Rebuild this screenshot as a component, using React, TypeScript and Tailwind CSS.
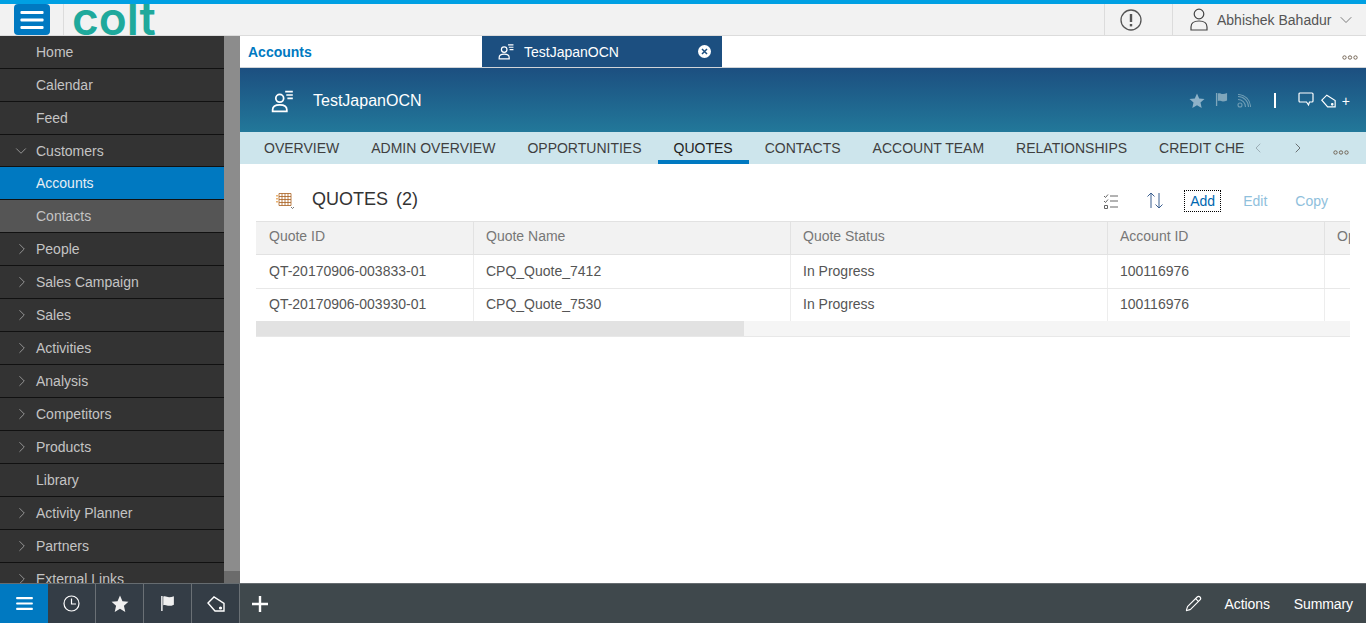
import React from 'react';
import { ChevronDown, ChevronLeft, ChevronRight, Pencil } from 'lucide-react';

const NAV_ITEMS = [
    { label: 'Home' },
    { label: 'Calendar' },
    { label: 'Feed' },
    { label: 'Customers', open: true },
    { label: 'Accounts', active: true },
    { label: 'Contacts', sub: true },
    { label: 'People', arrow: true },
    { label: 'Sales Campaign', arrow: true },
    { label: 'Sales', arrow: true },
    { label: 'Activities', arrow: true },
    { label: 'Analysis', arrow: true },
    { label: 'Competitors', arrow: true },
    { label: 'Products', arrow: true },
    { label: 'Library' },
    { label: 'Activity Planner', arrow: true },
    { label: 'Partners', arrow: true },
    { label: 'External Links', arrow: true },
];

const TABS = ['OVERVIEW', 'ADMIN OVERVIEW', 'OPPORTUNITIES', 'QUOTES', 'CONTACTS', 'ACCOUNT TEAM', 'RELATIONSHIPS', 'CREDIT CHECK'];

const COLUMNS = [
    { label: 'Quote ID', width: 'w-[218px]', pad: 'pl-[13px]' },
    { label: 'Quote Name', width: 'w-[317px]', pad: 'pl-3' },
    { label: 'Quote Status', width: 'w-[317px]', pad: 'pl-3' },
    { label: 'Account ID', width: 'w-[217px]', pad: 'pl-3' },
    { label: 'Opportunity', width: 'w-[60px]', pad: 'pl-3' },
];

const ROWS = [
    ['QT-20170906-003833-01', 'CPQ_Quote_7412', 'In Progress', '100116976', ''],
    ['QT-20170906-003930-01', 'CPQ_Quote_7530', 'In Progress', '100116976', ''],
];

const AccountIcon = ({ className }: { className?: string }) => (
    <svg className={className} viewBox="0 0 22 22" fill="none" stroke="currentColor" strokeWidth="1.6">
        <circle cx="8" cy="8.5" r="3.6" />
        <path d="M1.5 20.5 v-1.5 c0-3 2.5-4.5 6.5-4.5 s6.5 1.500 6.500 4.500 v1.500 z" />
        <path d="M13 2.500 h7 M14 5.500 h6 M15 8.500 h5" />
    </svg>
);

const StarIcon = ({ className }: { className?: string }) => (
    <svg className={className} viewBox="0 0 16 16" fill="currentColor">
        <path d="M8 .5 l2.200 5 5.300.5 -4 3.600 1.200 5.400 L8 12.200 3.300 15 l1.200-5.400 -4-3.600 5.300-.5 z" />
    </svg>
);

const FlagIcon = ({ className }: { className?: string }) => (
    <svg className={className} viewBox="0 0 14 16" fill="currentColor">
        <path d="M1 1 h1.400 v14 H1 z" />
        <path d="M3 1.500 c2.500-.8 3.500.6 5.500.6 c1.500 0 3-.4 4.500-1 v8 c-1.500.8-3 1.100-4.500 1.100 c-2 0-3-1.300-5.500-.5 z" />
    </svg>
);

const TagIcon = ({ className }: { className?: string }) => (
    <svg className={className} viewBox="0 0 18 16" fill="none" stroke="currentColor" strokeWidth="1.400">
        <path d="M1 7 L7 1 l10 6.500 v7.500 H8 z" />
        <circle cx="13.500" cy="12" r="0.900" fill="currentColor" />
    </svg>
);

const HamburgerIcon = ({ className }: { className?: string }) => (
    <svg className={className} viewBox="0 0 18 14" fill="currentColor">
        <rect x="0" y="0" width="18" height="2.400" rx="0.800" />
        <rect x="0" y="5.800" width="18" height="2.400" rx="0.800" />
        <rect x="0" y="11.600" width="18" height="2.400" rx="0.800" />
    </svg>
);

const Dots = () => (
    <svg width="16" height="5" viewBox="0 0 16 5" fill="none" stroke="#6b5b4b" strokeWidth="0.900">
        <circle cx="2.500" cy="2.500" r="1.700" />
        <circle cx="8" cy="2.500" r="1.700" />
        <circle cx="13.500" cy="2.500" r="1.700" />
    </svg>
);

const TopBar = () => (
    <div className="h-9 shrink-0 bg-[#f2f2f2] border-t-4 border-[#00a0e3] border-b border-b-[#dcdcdc] flex items-stretch">
        <div className="w-9 h-[31px] ml-[14px] mr-[13px] bg-[#0079c1] rounded-sm flex items-center justify-center">
            <HamburgerIcon className="w-[24px] h-[18px] text-white" />
        </div>
        <div className="border-l border-[#dcdcdc] pl-2 h-[31px] overflow-hidden">
            <span className="block text-[#1fa99c] text-[46px] leading-[29px] font-semibold [font-family:'Inter',sans-serif]">colt</span>
        </div>
        <div className="ml-auto flex items-stretch">
            <div className="w-[68px] border-l border-[#dcdcdc] flex items-center pl-[15px]">
                <svg width="22" height="22" viewBox="0 0 22 22" fill="none" stroke="#555" strokeWidth="1.300">
                    <circle cx="11" cy="11" r="10" />
                    <path d="M11 5 v8" strokeWidth="2.400" />
                    <path d="M11 15 v2.400" strokeWidth="2.400" />
                </svg>
            </div>
            <div className="w-[194px] border-l border-[#dcdcdc] flex items-center pl-[17px] text-[#555] text-sm">
                <svg width="18" height="23" viewBox="0 0 18 23" fill="none" stroke="#444" strokeWidth="1.200">
                    <circle cx="9" cy="6" r="4.800" />
                    <path d="M1 22 v-3 c0-4 3-6 8-6 s8 2 8 6 v3 z" />
                </svg>
                <span className="ml-[9px]">Abhishek Bahadur</span>
                <ChevronDown className="ml-[5px] w-5 h-5" strokeWidth={0.900} />
            </div>
        </div>
    </div>
);

const Sidebar = () => (
    <div className="w-[240px] shrink-0 flex overflow-hidden">
        <div className="w-[224px] bg-[#333333]">
            {NAV_ITEMS.map((item) => (
                <div
                    key={item.label}
                    className={`flex items-center pl-9 relative text-sm border-b border-[#111] ${item.open ? 'h-8' : 'h-[33px]'} ${item.active ? 'bg-[#0079c1] text-[#e6eef4]' : item.sub ? 'bg-[#555555] text-[#c4c4c4]' : 'text-[#c4c4c4]'}`}
                >
                    {item.arrow && <ChevronRight className="absolute left-[13px] w-[18px] h-[18px] text-[#b4b4b4]" strokeWidth={1} />}
                    {item.open && <ChevronDown className="absolute left-[12px] w-[18px] h-[18px] text-[#b4b4b4]" strokeWidth={1} />}
                    {item.label}
                </div>
            ))}
        </div>
        <div className="w-4 bg-[#8c8c8c] flex flex-col justify-end">
            <div className="h-3 bg-[#6b6b6b]" />
        </div>
    </div>
);

const TabStrip = () => (
    <div className="h-8 shrink-0 bg-white border-b border-[#d0d4d8] flex items-stretch">
        <div className="w-[242px] pl-2 flex items-center text-[#0079c1] text-sm font-bold">Accounts</div>
        <div className="w-[240px] bg-[#1c4f80] flex items-center pl-4 pr-[11px] text-white text-sm">
            <AccountIcon className="w-[17px] h-[17px]" />
            <span className="ml-[9px]">TestJapanOCN</span>
            <span className="ml-auto w-[13px] h-[13px] rounded-full bg-white text-[#1c4f80] flex items-center justify-center">
                <svg width="7" height="7" viewBox="0 0 7 7" stroke="currentColor" strokeWidth="1.500"><path d="M1 1 L6 6 M6 1 L1 6" /></svg>
            </span>
        </div>
        <div className="ml-auto pr-[8px] pt-[19px]"><Dots /></div>
    </div>
);

const AccountHeader = () => (
    <div className="h-16 shrink-0 bg-gradient-to-b from-[#1c4f80] to-[#22789a] flex items-center pl-[31px] pr-4 pt-px text-white">
        <AccountIcon className="w-[24px] h-[24px]" />
        <span className="ml-[18px] text-base">TestJapanOCN</span>
        <div className="ml-auto flex items-center">
            <StarIcon className="w-4 h-4 text-[#8eb2c8]" />
            <FlagIcon className="ml-[10px] mb-[3px] w-[13px] h-[15px] text-[#7fa6bb]" />
            <svg className="ml-[9px] w-[14px] h-[14px] text-[#6f9db5]" viewBox="0 0 14 14" fill="none" stroke="currentColor" strokeWidth="1.100">
                <circle cx="3" cy="11" r="2" />
                <path d="M1 5.500 a7.500 7.500 0 0 1 7.500 7.500 M1 2.500 a10.500 10.500 0 0 1 10.500 10.500 M1 0.500 a12.500 12.500 0 0 1 12.500 12.500" />
            </svg>
            <span className="ml-[23px] w-[1.500px] h-[15px] bg-white" />
            <svg className="ml-[22px] mb-[2px] w-[16px] h-[15px]" viewBox="0 0 16 15" fill="none" stroke="currentColor" strokeWidth="1.200">
                <path d="M2 1 h12 a1 1 0 0 1 1 1 v7 a1 1 0 0 1-1 1 h-2.500 l-1 3 -2-3 H2 a1 1 0 0 1-1-1 V2 a1 1 0 0 1 1-1 z" />
            </svg>
            <TagIcon className="ml-[7px] w-[15px] h-[14px]" />
            <span className="ml-[6px] text-sm leading-none">+</span>
        </div>
    </div>
);

const SubTabs = () => (
    <div className="h-8 shrink-0 bg-[#cde5ec] flex items-stretch relative">
        <div className="w-[1005px] pl-2 flex overflow-hidden">
            {TABS.map((tab) => (
                <div
                    key={tab}
                    className={`shrink-0 h-8 px-4 flex items-center text-sm whitespace-nowrap text-[#3f3f3f] border-b-4 pt-[3px] ${tab === 'QUOTES' ? 'border-[#0079c1] text-[#222]' : 'border-transparent'}`}
                >
                    {tab}
                </div>
            ))}
        </div>
        <ChevronLeft className="ml-[5px] mt-[8px] w-4 h-4 text-[#8a9aa2]" strokeWidth={1.100} />
        <ChevronRight className="ml-[24px] mt-[8px] w-4 h-4 text-[#444]" strokeWidth={1.100} />
        <div className="ml-[27px] mt-[18px]"><Dots /></div>
    </div>
);

const QuotesToolbar = () => (
    <div className="h-[57px] shrink-0 flex items-center pl-[36px] pr-[38px] pt-3">
        <svg className="mt-[2px]" width="19" height="18" viewBox="0 0 19 18" fill="none" stroke="#a85f20" strokeWidth="0.800">
            <path d="M3 2.500 h12 v12 H3 z M3 5.500 h12 M3 8.500 h12 M3 11.500 h12 M6 2.500 v12 M9 2.500 v12 M12 2.500 v12" />
            <path d="M1 4 v9" stroke="#e6a04c" strokeWidth="1.600" strokeDasharray="1.500 1.500" />
            <path d="M15 16 l1.500 1.500 1.500-1.500" stroke="#555" />
        </svg>
        <span className="ml-[17px] text-lg text-[#333]">QUOTES</span>
        <span className="ml-2 text-lg text-[#333]">(2)</span>
        <div className="ml-auto mt-1 flex items-center text-sm">
            <svg width="16" height="16" viewBox="0 0 16 16" fill="none" stroke="#666" strokeWidth="1">
                <path d="M1 3 l1.500 1.500 L5 1.500 M1 8 l1.500 1.500 L5 6.500 M1.500 12.500 h3 v3 h-3 z M7 3 h8 M7 8 h8 M7 14 h8" />
            </svg>
            <svg className="ml-[27px]" width="18" height="17" viewBox="0 0 18 17" fill="none" stroke="#3a5f8f" strokeWidth="1">
                <path d="M5 16 V1 M1.500 4.500 L5 1 l3.500 3.500 M13 1 v15 M9.500 12.500 L13 16 l3.500-3.500" />
            </svg>
            <span className="ml-[20px] h-[22px] w-[37px] flex items-center justify-center border border-dotted border-black text-[#0067b0]">Add</span>
            <span className="ml-[22px] text-[#8fc0dc]">Edit</span>
            <span className="ml-[28px] text-[#8fc0dc]">Copy</span>
        </div>
    </div>
);

const QuotesTable = () => (
    <div className="ml-4 mr-4 overflow-hidden text-sm">
        <div className="h-[34px] flex bg-[#f2f2f2] border-y border-[#e2e2e2] text-[#777]">
            {COLUMNS.map((col) => (
                <div key={col.label} className={`${col.width} ${col.pad} shrink-0 pb-1 flex items-center whitespace-nowrap overflow-hidden border-r border-[#e2e2e2]`}>{col.label}</div>
            ))}
        </div>
        {ROWS.map((row, r) => (
            <div key={row[0]} className={`flex text-[#555] ${r === 0 ? 'h-[34px] border-b border-[#e8e8e8]' : 'h-8'}`}>
                {row.map((cell, i) => (
                    <div key={i} className={`${COLUMNS[i].width} ${COLUMNS[i].pad} shrink-0 flex items-center border-r border-[#ededed] ${r === 0 ? 'pb-px' : 'pb-[2px]'}`}>{cell}</div>
                ))}
            </div>
        ))}
        <div className="h-4 bg-[#f5f5f5] border-b border-[#e8e8e8]">
            <div className="w-[488px] h-full bg-[#e2e2e2]" />
        </div>
    </div>
);

const BottomBar = () => (
    <div className="h-10 shrink-0 bg-[#3f484c] border-t border-[#666c70] flex items-stretch text-white">
        <div className="w-12 bg-[#0079c1] flex items-center justify-center">
            <HamburgerIcon className="w-[17px] h-[13px]" />
        </div>
        <div className="w-12 bg-[#343d46] border-r border-[#6a7075] flex items-center justify-center">
            <svg width="17" height="17" viewBox="0 0 17 17" fill="none" stroke="currentColor" strokeWidth="1.200">
                <circle cx="8.500" cy="8.500" r="7.500" />
                <path d="M8.500 3.500 v5.500 h4.500" />
            </svg>
        </div>
        <div className="w-12 bg-[#343d46] border-r border-[#6a7075] flex items-center justify-center">
            <StarIcon className="w-[18px] h-[18px] text-[#f0f0f0]" />
        </div>
        <div className="w-12 bg-[#343d46] border-r border-[#6a7075] flex items-center justify-center">
            <FlagIcon className="w-[15px] h-[17px] text-[#f0f0f0]" />
        </div>
        <div className="w-12 bg-[#343d46] border-r border-[#6a7075] flex items-center justify-center">
            <TagIcon className="w-[18px] h-[16px]" />
        </div>
        <div className="w-[40px] flex items-center justify-center">
            <svg width="16" height="16" viewBox="0 0 16 16" stroke="currentColor" strokeWidth="2.400"><path d="M8 0 v16 M0 8 h16" /></svg>
        </div>
        <div className="ml-auto flex items-center pr-[13px] text-sm">
            <Pencil className="w-[17px] h-[17px]" strokeWidth={1.600} />
            <span className="ml-[23px] tracking-[-0.100px]">Actions</span>
            <span className="ml-6 tracking-[-0.100px]">Summary</span>
        </div>
    </div>
);

export default function App() {
    return (
        <div className="w-[1366px] h-[623px] flex flex-col overflow-hidden bg-white [font-family:'Liberation_Sans',Arial,sans-serif]">
            <TopBar />
            <div className="flex-1 flex min-h-0">
                <Sidebar />
                <div className="flex-1 flex flex-col min-w-0">
                    <TabStrip />
                    <AccountHeader />
                    <SubTabs />
                    <QuotesToolbar />
                    <QuotesTable />
                </div>
            </div>
            <BottomBar />
        </div>
    );
}
